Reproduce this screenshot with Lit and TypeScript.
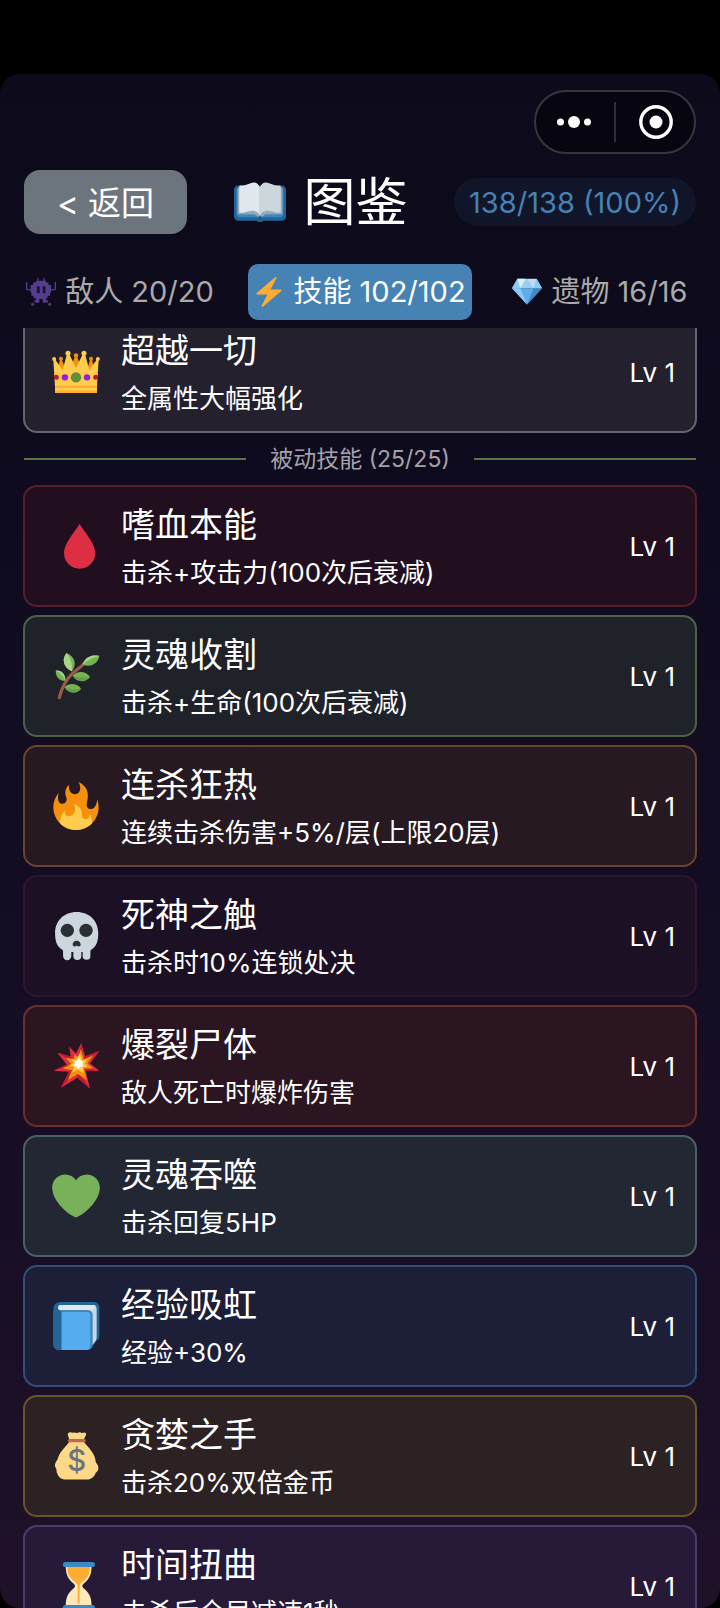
import { LitElement, html, svg, css } from "lit";
import type { TemplateResult } from "lit";
import { customElement, property, state } from "lit/decorators.js";
import { classMap } from "lit/directives/class-map.js";

const icons: Record<string, TemplateResult> = {
  bookOpen: svg`
    <path fill="#226699" d="M3 6.500h30a3 3 0 0 1 3 3v18.500a3 3 0 0 1-3 3H20.500a2.800 1.600 0 0 1-5 0H3a3 3 0 0 1-3-3V9.500a3 3 0 0 1 3-3z"/>
    <path fill="#3b88c3" d="M1.800 9h32.400v17.500a2 2 0 0 1-2 2H20l-2 1-2-1H3.800a2 2 0 0 1-2-2z"/>
    <path fill="#99aab5" d="M2.500 8h31v18.500H22L18 29l-4-2.500H2.500z"/>
    <path fill="#e1e8ed" d="M17.800 7.500C16.500 4.500 14 4 12 4.800 9 6 7 6.500 4.600 6.600c-.7 0-1 .4-1 1V24.500c0 .6.4 1 1 1C8 25.500 10 24 13 24s4.800 3 4.800 3z"/>
    <path fill="#ccd6dd" d="M18 7.500c1.300-3 3.800-3.500 5.800-2.700 3 1.200 5 1.700 7.600 1.800.7 0 1 .4 1 1V24.500c0 .6-.4 1-1 1C28 25.500 26 24 23 24s-5 3-5 3z"/>
    <circle cx="18" cy="29" r="1.300" fill="#1b5a8a"/>`,
  alien: svg`
    <g fill="#553c8c">
      <path d="M12 4.500h12v2h3v3h3v9h-1v4h-3v3h-2v5h-4v-4h-4v4h-4v-5H9v-3H6.500v-4h-1v-9h3v-3H12z"/>
      <path d="M13.500 1H15v5h-1.500zM21 1h1.500v5H21zM0 6h1.600v8.500H6V16H1.500A1.500 1.500 0 0 1 0 14.500zM34.400 6H36v8.500a1.500 1.500 0 0 1-1.500 1.500H30v-1.500h4.400z"/>
      <path d="M10 28h5v2.500h-5zM21.500 28h5v2.500h-5z"/>
    </g>
    <path fill="#1a1230" d="M13 11h3.400v8.500H13zM20 11h3.400v8.500H20z"/>
    <circle cx="8" cy="32.800" r="1.900" fill="#474252"/><circle cx="28.500" cy="32.800" r="1.900" fill="#474252"/>`,
  bolt: svg`<path fill="#ffac33" d="M32.938 15.651C32.792 15.260 32.418 15 32 15H19.925L26.890 1.458c.219-.426.106-.947-.271-1.243C26.437.071 26.218 0 26 0c-.233 0-.466.082-.653.243L18 6.588 3.347 19.243c-.316.273-.430.714-.284 1.105S3.582 21 4 21h12.075L9.110 34.542c-.219.426-.106.947.271 1.243.182.144.401.215.619.215.233 0 .466-.082.653-.243L18 29.412l14.653-12.655c.317-.273.430-.714.285-1.106z"/>`,
  gem: svg`
    <path fill="#bdddf4" d="M6.500 2h23L36 13.500H0z"/>
    <path fill="#8ccaf7" d="M6.500 2 0 13.500h10zM29.500 2 36 13.500H26z"/>
    <path fill="#d7eefc" d="M6.500 2h9L10 13.500z"/>
    <path fill="#9bcdf0" d="M18 2l-8 11.500h16z"/>
    <path fill="#5dadec" d="M0 13.500h36L18 33z"/>
    <path fill="#8ccaf7" d="M0 13.500h10L18 33z"/>
    <path fill="#4289c1" d="M36 13.500H26L18 33z"/>`,
  crown: svg`
    <path fill="#f4900c" d="M6 9h1.500l3 8-7 2zM17 7h2l5 12H12zM28.500 9H30l3 10-7-2z"/>
    <circle cx="6.700" cy="8" r="1.500" fill="#f4900c"/><circle cx="18" cy="5.700" r="1.700" fill="#f4900c"/><circle cx="29.300" cy="8" r="1.500" fill="#f4900c"/>
    <path fill="#ffcc4d" d="M2.250 33.700V29L1 8.500h1.200L8 16.500 11.400 4h1.200L18 15 23.400 4h1.200L28 16.500 33.800 8.500H35L33.750 29v4.700z"/>
    <circle cx="1.600" cy="8.200" r="1.500" fill="#ffcc4d"/><circle cx="12" cy="4" r="1.900" fill="#ffcc4d"/><circle cx="24" cy="4" r="1.900" fill="#ffcc4d"/><circle cx="34.400" cy="8.200" r="1.500" fill="#ffcc4d"/>
    <path fill="#ffac33" d="M2.250 28.300h31.500v1.500H2.250zM2.250 32h31.500v1.700H2.250z"/>
    <circle cx="18" cy="22" r="3.900" fill="#5c913b"/>
    <circle cx="9.700" cy="22" r="2.400" fill="#9a1bde"/><circle cx="26.300" cy="22" r="2.400" fill="#9a1bde"/>
    <circle cx="3.200" cy="22" r="1.900" fill="#be1931"/><circle cx="32.800" cy="22" r="1.900" fill="#be1931"/>`,
  drop: svg`<path fill="#dd2e44" d="M20.700 1.500C23 5.500 32.500 16 32.500 23.300c0 6.600-5.200 11.700-11.800 11.700S9 29.900 9 23.300C9 16 18.400 5.500 20.700 1.500z"/>`,
  herb: svg`
    <path fill="none" stroke="#9c5849" stroke-width="2.400" stroke-linecap="round" d="M5.500 34.200C7.500 26 11 20 15.500 16c3-2.600 6-4.500 9-8"/>
    <path fill="#77b255" d="M11 .8C7 5 8.500 12 15 14.500 19 9 17 3.500 11 .8zM23 9.500c2-6 7-7.500 12.500-6.500-1 5.500-6 8.800-12.500 6.500zM2.800 14c4-.5 7.500 2.500 7.200 7.500-4 .5-7.300-2.500-7.200-7.500zM15.500 18c3-4 10-4 13 .8-3 4.500-10 4-13-.8zM9.300 26.500c3-3.500 9.500-3.500 12.500 1-3 4.300-9.500 4-12.500-1z"/>
    <path fill="#a6d388" d="M11 .8C7 5 8.500 12 15 14.500 15.500 9 14 4.500 11 .8zM23 9.500c2-6 7-7.500 12.500-6.500-4.500 1-8.500 3-12.500 6.500zM2.800 14c4-.5 7.500 2.500 7.200 7.500C8.500 18 6 15.500 2.800 14z"/>
    <path fill="#5c913b" d="M15.500 18c4 1.300 8.500 1.500 13 .8-3 4.500-10 4-13-.8zM9.300 26.500c4 1.500 8 1.800 12.500 1-3 4.300-9.500 4-12.500-1z" opacity=".6"/>`,
  fire: svg`
    <path fill="#f4900c" d="M35 19c0-2.062-.367-4.039-1.040-5.868-.46 5.389-3.333 8.157-6.335 6.868-2.812-1.208-.917-5.917-.777-8.164.236-3.809-.012-8.169-6.931-11.794 2.875 5.500.333 8.917-2.333 9.125-2.958.231-5.667-2.542-4.667-7.042-3.238 2.386-3.332 6.402-2.333 9 1.042 2.708-.042 4.958-2.583 5.208-2.840.280-4.418-3.041-2.963-8.333C2.520 10.965 1 14.805 1 19c0 9.389 7.611 17 17 17s17-7.611 17-17z"/>
    <path fill="#ffcc4d" d="M28.394 23.999c.148 3.084-2.561 4.293-4.019 3.709-2.106-.843-1.541-2.291-2.083-5.291s-2.625-5.083-5.708-6c2.250 6.333-1.247 8.667-3.080 9.084-1.872.426-3.753-.001-3.968-4.007C7.352 23.668 6 26.676 6 30c0 .368.023.730.055 1.090C9.125 34.124 13.342 36 18 36s8.875-1.876 11.945-4.910c.032-.359.055-.722.055-1.090 0-2.187-.584-4.236-1.606-6.001z"/>`,
  skull: svg`
    <path fill="#ccd6dd" d="M18.500 0C28 0 34.700 6.500 34.700 16c0 6-1.500 9.500-4.200 11.500-1 .7-1.700 1-1.700 2V33a2.900 2.900 0 0 1-5.800 0v-3h-1v3a2.900 2.900 0 0 1-6 0v-3h-1.500v3a3 3 0 0 1-6.200 0v-3.500c0-1-.7-1.300-1.700-2C3.800 25.500 2.300 22 2.300 16 2.300 6.500 9 0 18.500 0z"/>
    <circle cx="11.500" cy="13.800" r="5" fill="#292f33"/><circle cx="25.500" cy="13.800" r="5" fill="#292f33"/>
    <path fill="#292f33" d="M18.500 21.500c2 0 3 1.600 3 3 0 1.500-1.800 1.700-3 .6-1.200 1.100-3 .9-3-.6 0-1.400 1-3 3-3z"/>`,
  burst: svg`
    <path fill="#dd2e44" d="M22 .7l2.800 10 10.700-4-7 9.300 7 5.500-10.300.3 3.300 13L19 26.800 6.700 34.300l6-12-11.500-.8 9.800-4.700L4 8l10 2.800L13 3.500l5 5.200z"/>
    <path fill="#be1931" d="M22 .7l1.600 11L19 16zM35.500 6.700L26 15.500l-6 1.500 4.800-6.300zM35.500 21.500L24 19.500l-4-2.500 5.200 4.800zM28.500 34.800L22 25.500 19 17v9.800zM6.700 34.300l9-10L19 17l-6.300 5.300zM1.200 21.500l10.300-3L19 17l-8 .2zM4 8l9.500 5.500L19 16l-5-5.200z"/>
    <path fill="#f4900c" d="M21.600 5l2.400 8 7-3-4.600 6 4.300 3.600-6.600.5 2 8.600-6.800-4.700-7.400 4.500 3-7.500-7-1.200 6.500-3.300-4-4.700 6 1 .6-4 2.800 3z"/>
    <path fill="#ffcc4d" d="M21 8.500l1.800 5.500 3.600-1.200-2 3.500 2.200 2-3.500.6.500 4.500-4.300-2.800-4 2.300 1.400-4.300-3.800-1 3.400-2-1.800-2.800 3.500.5z"/>
    <path fill="#fff" d="M20.300 11.500l1.300 2.700 2 .3-1 1.900.8 2-2.200.2-1.500 1.600-1.300-1.900-2.400-.3 1.300-1.900-.3-2.200 2.100.2z"/>`,
  heart: svg`<path fill="#78b159" d="M35.885 11.833c0-5.450-4.418-9.868-9.867-9.868-3.308 0-6.227 1.633-8.018 4.129-1.791-2.496-4.710-4.129-8.017-4.129-5.450 0-9.868 4.417-9.868 9.868 0 .772.098 1.520.266 2.241C1.751 22.587 11.216 31.568 18 34.034c6.783-2.466 16.249-11.447 17.617-19.959.170-.721.268-1.469.268-2.242z"/>`,
  book: svg`
    <path fill="#226699" d="M6 0h25.500a4 4 0 0 1 4 4v21c0 2.500-1 3.500-2.500 4.500L30 34c-1 1.500-2 2-3.500 2H5a4 4 0 0 1-4-4V5a5 5 0 0 1 5-5z"/>
    <path fill="#ccd6dd" d="M6.500 2.300h24.200c1.800 0 2.800 1 2.800 2.800v21c0 2-.5 2.800-1.500 4L29 34V9c0-2-.8-2.800-2.800-2.800H6.500C4 6.200 4 2.300 6.500 2.300z"/>
    <path fill="#e1e8ed" d="M6.500 2.300h24c1 0 1.700.2 2.200.8l-3 3.600c-.8-.5-1.500-.5-2.500-.5H6.500C4 6.200 4 2.300 6.500 2.300z"/>
    <path fill="#3b88c3" d="M7 6.200h20c2.300 0 3.500 1.200 3.500 3.500v22c0 2.500-1.500 4.300-4 4.300H7z"/>
    <path fill="#55acee" d="M7 7.500h19.500c1.500 0 2.200.8 2.200 2.300V32c0 2.500-1.200 4-3.200 4H7z"/>
    <path fill="#226699" d="M1 5c0 2 1.500 2.500 4 2.500h2V36H5a4 4 0 0 1-4-4z"/>`,
  bag: svg`
    <path fill="#fdd888" d="M12.200.8c1.500-1.300 2.500.2 3.600-.3 1.300-.6 2 .4 3 .2 1.200-.2 2-.9 3-.2 1.200.7 2.300-1 3.500.3 1 1.400-.9 2.700-1.300 5.200h-11C12.700 3.500 11.200 2.200 12.200.8zM13 7.500h11c4 5 8.500 9 8.700 14.500.1 1.500 2.100 2.500 2.100 5 0 2-1 2.800-2 3.500-.8 2.500-3 5.200-6.800 5.200H10.500c-3.800 0-6-2.200-6.500-4.700-1-.8-.3-2.500-.8-3.500-1.800-2-.7-5 .8-6.500C5.500 15 9 12.500 13 7.500z"/>
    <path fill="#bf6952" d="M13 5.300h11.200c1.500 0 1.500 2.400 0 2.400H13c-1.500 0-1.500-2.400 0-2.400z"/>
    <text class="coin" x="18.500" y="29" text-anchor="middle" fill="#67757f">$</text>`,
  hourglass: svg`
    <path fill="#ffe8b6" d="M10.300 3h19.400c0 8-2.700 10.500-6.200 13.500-1 .9-1 2.100 0 3C27 22.500 29.700 25 29.700 33H10.300c0-8 2.700-10.500 6.200-13.500 1-.9 1-2.100 0-3C13 13.500 10.300 11 10.300 3z"/>
    <path fill="#ffac33" d="M11.500 3.500h17c0 6-2 8.700-5.500 11.200-1.800 1.300-2.300 2.200-2.300 4.500v12h-1.400v-12c0-2.300-.5-3.200-2.300-4.500C13.500 12.200 11.500 9.500 11.500 3.500z"/>
    <path fill="#3b88c3" d="M10 0h20.300a1.900 1.900 0 0 1 0 3.800H10A1.900 1.900 0 0 1 10 0zM10 32.200h20.300a1.900 1.900 0 0 1 0 3.800H10a1.900 1.900 0 0 1 0-3.800z"/>`,
};

@customElement("emoji-icon")
class EmojiIcon extends LitElement {
  @property() name = "";

  static styles = css`
    :host {
      display: block;
      flex: none;
    }
    .art {
      display: block;
      width: 100%;
      height: 100%;
      overflow: visible;
    }
    .coin {
      font: 500 22px Inter, sans-serif;
    }
  `;

  render() {
    return html`<svg class="art" viewBox="0 0 36 36" aria-hidden="true">${icons[this.name]}</svg>`;
  }
}

interface Skill {
  icon: string;
  tone: string;
  name: string;
  desc: string;
  level: number;
}

const ultimate: Skill[] = [
  { icon: "crown", tone: "silver", name: "超越一切", desc: "全属性大幅强化", level: 1 },
];

const passive: Skill[] = [
  { icon: "drop", tone: "crimson", name: "嗜血本能", desc: "击杀+攻击力(100次后衰减)", level: 1 },
  { icon: "herb", tone: "moss", name: "灵魂收割", desc: "击杀+生命(100次后衰减)", level: 1 },
  { icon: "fire", tone: "ember", name: "连杀狂热", desc: "连续击杀伤害+5%/层(上限20层)", level: 1 },
  { icon: "skull", tone: "void", name: "死神之触", desc: "击杀时10%连锁处决", level: 1 },
  { icon: "burst", tone: "scarlet", name: "爆裂尸体", desc: "敌人死亡时爆炸伤害", level: 1 },
  { icon: "heart", tone: "teal", name: "灵魂吞噬", desc: "击杀回复5HP", level: 1 },
  { icon: "book", tone: "azure", name: "经验吸虹", desc: "经验+30%", level: 1 },
  { icon: "bag", tone: "gold", name: "贪婪之手", desc: "击杀20%双倍金币", level: 1 },
  { icon: "hourglass", tone: "violet", name: "时间扭曲", desc: "击杀后全局减速1秒", level: 1 },
];

@customElement("skill-card")
class SkillCard extends LitElement {
  @property({ attribute: false }) skill!: Skill;

  static styles = css`
    :host {
      display: block;
    }
    .card {
      display: flex;
      align-items: center;
      gap: 21px;
      box-sizing: border-box;
      padding: 10px 20px 10px 27px;
      border: 2px solid var(--edge);
      border-radius: 14px;
      background: var(--fill);
      color: #fff;
    }
    .icon {
      width: 48px;
      height: 48px;
    }
    .body {
      flex: 1;
      min-width: 0;
      padding-top: 2px;
    }
    .name,
    .desc {
      margin: 0;
      font-weight: 400;
      white-space: nowrap;
    }
    .name {
      font-size: 34px;
      line-height: 52px;
    }
    .desc {
      font-size: 26px;
      line-height: 44px;
    }
    .level {
      padding-top: 2px;
      font-size: 26px;
      line-height: 36px;
    }
    .silver { --fill: #24202e; --edge: #666471; }
    .crimson { --fill: #210f20; --edge: #591d2e; }
    .moss { --fill: #202229; --edge: #4c6147; }
    .ember { --fill: #261922; --edge: #6c4230; }
    .void { --fill: #1c1024; --edge: #2d1630; }
    .scarlet { --fill: #2a1521; --edge: #6c2e29; }
    .teal { --fill: #232633; --edge: #4a6264; }
    .azure { --fill: #1d1f38; --edge: #2f5078; }
    .gold { --fill: #2c2224; --edge: #6a5324; }
    .violet { --fill: #261a38; --edge: #4d386e; }
  `;

  render() {
    const s = this.skill;
    return html`
      <article class=${classMap({ card: true, [s.tone]: true })}>
        <emoji-icon class="icon" .name=${s.icon}></emoji-icon>
        <div class="body">
          <h3 class="name">${s.name}</h3>
          <p class="desc">${s.desc}</p>
        </div>
        <span class="level">Lv ${s.level}</span>
      </article>
    `;
  }
}

const tabs = [
  { id: "enemy", icon: "alien", label: "敌人 20/20" },
  { id: "skill", icon: "bolt", label: "技能 102/102" },
  { id: "relic", icon: "gem", label: "遗物 16/16" },
];

@customElement("app-root")
class AppRoot extends LitElement {
  @state() private active = "skill";

  static styles = css`
    :host {
      display: flex;
      flex-direction: column;
      box-sizing: border-box;
      height: 100vh;
      padding-top: 74px;
      background: #000;
      color: #fff;
      font-family: Inter, "Noto Sans CJK SC", sans-serif;
    }
    button {
      margin: 0;
      padding: 0;
      border: 0;
      background: none;
      color: inherit;
      font: inherit;
      cursor: pointer;
    }
    .screen {
      flex: 1;
      min-height: 0;
      display: flex;
      flex-direction: column;
      overflow: hidden;
      border-radius: 20px;
      background: linear-gradient(#0d0a1b, #0e0b1e 25%, #150d23 60%, #1e1128);
    }
    .top {
      display: flex;
      justify-content: flex-end;
      padding: 16px 24px;
    }
    .capsule {
      display: flex;
      align-items: center;
      box-sizing: border-box;
      width: 162px;
      height: 64px;
      border: 2px solid #37353f;
      border-radius: 32px;
      background: #07050f;
    }
    .capsule-button {
      flex: 1;
      display: grid;
      place-items: center;
      height: 100%;
    }
    .glyph {
      display: block;
      width: 36px;
      height: 36px;
      fill: #fff;
    }
    .rule {
      width: 2px;
      height: 40px;
      background: #2f2d37;
    }
    .header {
      display: flex;
      align-items: center;
      justify-content: space-between;
      padding: 0 24px;
    }
    .back {
      padding: 2px 33px 0;
      border-radius: 16px;
      background: #6c757d;
      font-size: 33px;
      line-height: 62px;
      white-space: nowrap;
    }
    .title {
      display: flex;
      align-items: center;
      gap: 18px;
      margin: 0;
      font-size: 52px;
      line-height: 64px;
      font-weight: 400;
      white-space: nowrap;
    }
    .title-icon {
      width: 52px;
      height: 52px;
    }
    .title-text {
      padding-top: 2px;
      line-height: 62px;
    }
    .progress {
      padding: 2px 15px 0;
      border-radius: 24px;
      background: #111529;
      color: #4682b4;
      font-size: 29px;
      line-height: 46px;
      white-space: nowrap;
    }
    .tabs {
      display: grid;
      grid-template-columns: 6fr 7fr 6fr;
      gap: 32px;
      padding: 30px 24px 8px;
    }
    .tab {
      display: flex;
      align-items: center;
      justify-content: center;
      gap: 9px;
      height: 56px;
      border-radius: 10px;
      color: #aaa;
      font-size: 29px;
      line-height: 56px;
      white-space: nowrap;
    }
    .tab.on {
      background: #4682b4;
      color: #fff;
    }
    .tab-icon {
      width: 30px;
      height: 30px;
    }
    .list {
      flex: 1;
      min-height: 0;
      overflow-y: auto;
      scrollbar-width: none;
      padding: 0 23px;
    }
    .cards {
      display: flex;
      flex-direction: column;
      gap: 8px;
    }
    .divider {
      display: flex;
      align-items: center;
      gap: 24px;
      margin: 0;
      padding: 0 1px;
      color: #a3a2aa;
      font-size: 23px;
      line-height: 52px;
      font-weight: 400;
      white-space: nowrap;
    }
    .divider::before,
    .divider::after {
      content: "";
      flex: 1;
      height: 2px;
      background: #5d7546;
    }
  `;

  firstUpdated() {
    requestAnimationFrame(() => {
      const list = this.renderRoot.querySelector(".list");
      if (list) list.scrollTop = 17;
    });
  }

  render() {
    return html`
      <main class="screen">
        <div class="top">
          <div class="capsule">
            <button class="capsule-button" aria-label="更多">
              <svg class="glyph" viewBox="0 0 36 36" aria-hidden="true">
                <circle cx="3.500" cy="18" r="3.500" /><circle cx="17" cy="18" r="6" /><circle cx="30.500" cy="18" r="3.500" />
              </svg>
            </button>
            <span class="rule"></span>
            <button class="capsule-button" aria-label="关闭">
              <svg class="glyph" viewBox="0 0 36 36" aria-hidden="true">
                <circle cx="19" cy="18" r="15.200" fill="none" stroke="#fff" stroke-width="3.400" /><circle cx="19" cy="18" r="6.500" />
              </svg>
            </button>
          </div>
        </div>
        <header class="header">
          <button class="back">&lt; 返回</button>
          <h1 class="title">
            <emoji-icon class="title-icon" name="bookOpen"></emoji-icon>
            <span class="title-text">图鉴</span>
          </h1>
          <span class="progress">138/138 (100%)</span>
        </header>
        <nav class="tabs">
          ${tabs.map(
            (t) => html`
              <button
                class=${classMap({ tab: true, on: t.id === this.active })}
                aria-pressed=${t.id === this.active ? "true" : "false"}
                @click=${() => (this.active = t.id)}
              >
                <emoji-icon class="tab-icon" .name=${t.icon}></emoji-icon>${t.label}
              </button>
            `
          )}
        </nav>
        <section class="list">
          <div class="cards">${ultimate.map((s) => html`<skill-card .skill=${s}></skill-card>`)}</div>
          <h2 class="divider">被动技能 (25/25)</h2>
          <div class="cards">${passive.map((s) => html`<skill-card .skill=${s}></skill-card>`)}</div>
        </section>
      </main>
    `;
  }
}
